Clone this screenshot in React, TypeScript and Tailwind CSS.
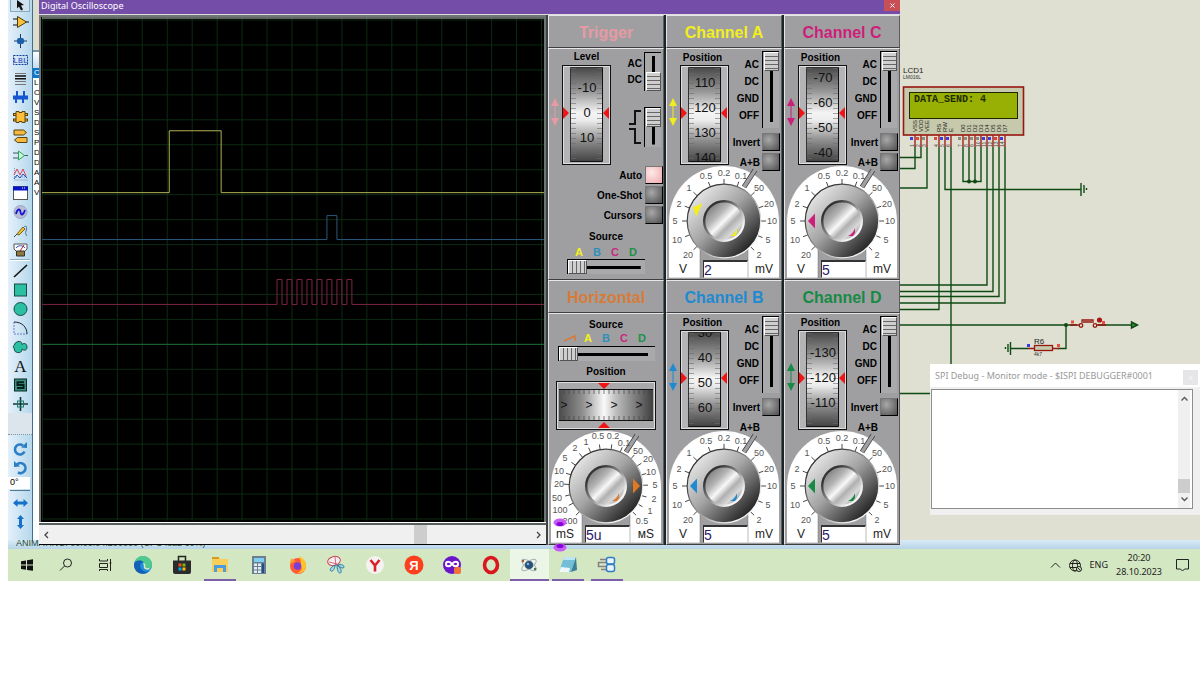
import type { ReactNode } from "react";
import clsx from "clsx";

/* ---------- LEFT TOOLBAR ---------- */

const tools: { label: string; icon: ReactNode }[] = [
  {
    label: "Component mode",
    icon: (
      <>
        <path d="M0 4h5M0 10h5M13 7h3" stroke="#111" />
        <path d="M4.500 1.500v11l9-5.500z" fill="#fbbf3a" stroke="#4d3c10" />
      </>
    ),
  },
  {
    label: "Junction dot mode",
    icon: (
      <>
        <path d="M1 7h13M7.500 0v14" stroke="#123c6b" />
        <rect x="4" y="4" width="7" height="6" rx="2" fill="#1b5fa8" />
      </>
    ),
  },
  {
    label: "Wire label mode",
    icon: (
      <>
        <rect x="0.500" y="2.500" width="14" height="9" fill="none" stroke="#123c9b" strokeDasharray="2 1" />
        <text x="7.500" y="10" fontSize="8" textAnchor="middle" fill="#1c39bb" fontFamily="Liberation Mono, monospace">LBL</text>
      </>
    ),
  },
  {
    label: "Text script mode",
    icon: (
      <>
        <path d="M2 1.500h11M2 9.500h11M2 12.500h11" stroke="#777" />
        <path d="M2 4h11M2 6.800h11" stroke="#111" strokeWidth="1.500" />
      </>
    ),
  },
  {
    label: "Buses mode",
    icon: (
      <>
        <path d="M0 6.500h15" stroke="#1557d0" strokeWidth="4" />
        <path d="M4 0v6M11 0v6M3 7v5M10 7v5" stroke="#1557d0" strokeWidth="2" />
      </>
    ),
  },
  {
    label: "Subcircuit mode",
    icon: (
      <>
        <path d="M0 4.500h15M0 10h15" stroke="#5c3d00" strokeWidth="3" />
        <path d="M1 4.500h13M1 10h13" stroke="#fbbf3a" />
        <path d="M3 1.500h3v1h3v-1h3v11H9v-1H6v1H3z" fill="#fbbf3a" stroke="#5c4308" />
      </>
    ),
  },
  {
    label: "Terminals mode",
    icon: (
      <>
        <path d="M1 1h9.500l3 2.500-3 2.500H1z" fill="#f5b93d" stroke="#574013" />
        <path d="M14 8.500H4.500l-3 2.500 3 2.500H14z" fill="#f5b93d" stroke="#574013" />
      </>
    ),
  },
  {
    label: "Device pins mode",
    icon: (
      <>
        <path d="M0 5h5M0 10h5M11 7.500h4" stroke="#3d5c66" />
        <path d="M5.500 3v9l6-4.500z" fill="#d3f5df" stroke="#28a75a" />
      </>
    ),
  },
  {
    label: "Graph mode",
    icon: (
      <>
        <path d="M1.500 1v12h13M1 10h13" fill="none" stroke="#7d93b3" strokeDasharray="1 1" />
        <path d="M1 8l3-6 3 6 3-6 3 7" fill="none" stroke="#e0405a" />
        <path d="M1 12l3-4 3 3 3-4 4 4" fill="none" stroke="#2456c8" />
      </>
    ),
  },
  {
    label: "Active popup mode",
    icon: (
      <>
        <rect x="0.500" y="0.500" width="14" height="13" fill="#fff" stroke="#555" />
        <path d="M0 2.500h15" stroke="#0713c9" strokeWidth="4" />
        <path d="M9 2h4" stroke="#fff" strokeDasharray="1 1" />
      </>
    ),
  },
  {
    label: "Generator mode",
    icon: (
      <>
        <circle cx="7.500" cy="7" r="6.500" fill="#b9bed6" stroke="#9aa3c4" />
        <path d="M3 9c1-5 4-6 4.500-2s3 3 4.500-2" fill="none" stroke="#1414d0" strokeWidth="1.800" />
      </>
    ),
  },
  {
    label: "Probe mode",
    icon: (
      <>
        <path d="M1 13l3-3" stroke="#444" />
        <path d="M4 10l6-7 2 2-6 6z" fill="#f4c430" stroke="#7b6010" />
        <path d="M11 3c3-3 3 2 2 4s0 4 1 5" fill="none" stroke="#4a6fa5" />
      </>
    ),
  },
  {
    label: "Instruments mode",
    icon: (
      <>
        <path d="M1 1h13v5l-3 3H4L1 6z" fill="#fff" stroke="#555" />
        <path d="M3 5c2-3 7-3 9 0" fill="none" stroke="#2456c8" />
        <path d="M7 8l4-6" stroke="#d31b1b" />
        <path d="M3.500 8h8v5h-8z" fill="#8b7a3b" stroke="#333" />
      </>
    ),
  },
];

const drawTools: { label: string; icon: ReactNode }[] = [
  { label: "2D line", icon: <path d="M1 13L14 1" stroke="#111" strokeWidth="1.600" /> },
  { label: "2D box", icon: <rect x="1.500" y="1" width="12" height="12" fill="#2bbfa3" stroke="#1c4a44" /> },
  { label: "2D circle", icon: <circle cx="7.500" cy="7" r="6.500" fill="#2bbfa3" stroke="#1c4a44" /> },
  {
    label: "2D arc",
    icon: (
      <>
        <path d="M1 1v12h13" fill="none" stroke="#6b7fd0" strokeDasharray="2 1" />
        <path d="M1 1c8 0 13 5 13 12" fill="none" stroke="#223" />
      </>
    ),
  },
  {
    label: "2D closed path",
    icon: (
      <path
        d="M4 2c3-1.500 5 0 5 2.500 2-2 5-1 5 2.500s-3 4-5 2c0 3-2 4-4.500 3.500S1 10.500 1.500 9C0 7.500 0 5.500 1.500 5 1.500 3.500 2.500 2.500 4 2z"
        fill="#2bbfa3"
        stroke="#1c4a44"
      />
    ),
  },
  {
    label: "2D text",
    icon: (
      <text x="7.500" y="13" fontSize="17" textAnchor="middle" fill="#111" fontFamily="Liberation Serif, serif">A</text>
    ),
  },
  {
    label: "2D symbol",
    icon: (
      <>
        <rect x="1.500" y="1" width="12" height="12" fill="#3d8d7e" stroke="#0b2b27" />
        <path d="M11 4.200H4.500v2.800h6v2.900H4" fill="none" stroke="#04201c" strokeWidth="2" />
      </>
    ),
  },
  {
    label: "2D marker",
    icon: (
      <>
        <path d="M0 7h15M7.500 0v14" stroke="#103c36" strokeWidth="1.600" />
        <rect x="4.500" y="4" width="6" height="6" fill="none" stroke="#1d7a6c" />
      </>
    ),
  },
];

function ToolButton({ label, children, className }: { label: string; children: ReactNode; className?: string }) {
  return (
    <button type="button" aria-label={label} className={clsx("flex h-[19px] items-center justify-center", className)}>
      <svg width="15" height="14" viewBox="0 0 15 14" className="overflow-visible">{children}</svg>
    </button>
  );
}

function Toolbar() {
  return (
    <div className="flex w-6 shrink-0 flex-col bg-linear-to-r from-[#e4f0fa] to-[#b5d8ec]">
      <button
        type="button"
        aria-label="Selection mode"
        className="mx-0.5 flex h-3 justify-center border border-t-0 border-[#8ba9bd] bg-[#cfe3f0]"
      >
        <svg width="11" height="11" viewBox="0 0 11 11">
          <path d="M2 0l7 5-3 .5 2 4-2 1-2-4-2 2z" fill="#111" />
        </svg>
      </button>
      {tools.map((t) => (
        <ToolButton key={t.label} label={t.label}>{t.icon}</ToolButton>
      ))}
      <div className="mx-0.5 h-0.5 border-t border-[#8fb1c6] bg-white" />
      {drawTools.map((t) => (
        <ToolButton key={t.label} label={t.label}>{t.icon}</ToolButton>
      ))}
      <div className="h-[22px] border-b border-dotted border-[#7b95a8] bg-[#dce5ec]" />

      {/* Rotation and mirroring */}
      <ToolButton label="Rotate clockwise" className="mt-1">
        <path d="M11.500 9.500A5 5 0 1 1 10 3.500" fill="none" stroke="#2b7ec6" strokeWidth="2.600" />
        <path d="M8 5.500l6 .5V0z" fill="#2b7ec6" />
      </ToolButton>
      <ToolButton label="Rotate anti-clockwise">
        <path d="M4 3.500A5 5 0 1 1 5 11.500" fill="none" stroke="#2b7ec6" strokeWidth="2.600" />
        <path d="M7 5.500L1 6V0z" fill="#2b7ec6" />
      </ToolButton>
      <input
        aria-label="Angle"
        defaultValue="0°"
        className="mr-0.5 h-3 w-[22px] bg-white pl-0.5 font-['Liberation_Sans',sans-serif] text-[9px] text-black"
      />
      <div className="mx-0.5 mb-0.5 h-0.5 border-b border-[#54798f]" />
      <ToolButton label="Mirror horizontally">
        <path d="M0 7l4.500-4v2.500h6V3L15 7l-4.500 4V8.500h-6V11z" fill="#1672c8" />
      </ToolButton>
      <ToolButton label="Mirror vertically">
        <path d="M7.500 0L11 4H9v6h2l-3.500 4L4 10h2V4H4z" fill="#1672c8" />
      </ToolButton>
    </div>
  );
}

const objects = ["C", "L", "O", "V", "S", "D", "S", "P", "D", "D", "A", "A", "V"];

function ObjectList() {
  return (
    <div className="flex w-[7px] shrink-0 flex-col overflow-hidden border-l border-[#3a6f96] bg-white font-['Liberation_Sans',sans-serif]">
      <div className="h-[52px] border-b-2 border-[#7c93a3] bg-[#dfdccb]" />
      <div className="h-4 bg-linear-to-b from-white to-[#c5dcec]" />
      <ul>
        {objects.map((o, i) => (
          <li key={i} className={clsx("h-[10px] pl-px text-[8px] leading-[10px]", i === 0 ? "bg-[#0a78d0] text-white" : "text-black")}>
            {o}
          </li>
        ))}
      </ul>
    </div>
  );
}

/* ---------- SCHEMATIC ---------- */

const pins = [
  { x: 915, name: "VSS", n: 1, c: "#3b3be0" },
  { x: 921, name: "VDD", n: 2, c: "#e04a3a" },
  { x: 927, name: "VEE", n: 3, c: "#8b8b80" },
  { x: 939, name: "RS", n: 4, c: "#e04a3a" },
  { x: 945, name: "RW", n: 5, c: "#3b3be0" },
  { x: 951, name: "E", n: 6, c: "#3b3be0" },
  { x: 963, name: "D0", n: 7, c: "#8b8b80" },
  { x: 969, name: "D1", n: 8, c: "#8b8b80" },
  { x: 975, name: "D2", n: 9, c: "#8b8b80" },
  { x: 981, name: "D3", n: 10, c: "#8b8b80" },
  { x: 987, name: "D4", n: 11, c: "#3b3be0" },
  { x: 993, name: "D5", n: 12, c: "#3b3be0" },
  { x: 999, name: "D6", n: 13, c: "#e03a3a" },
  { x: 1005, name: "D7", n: 14, c: "#3b3be0" },
];

function Schematic() {
  return (
    <svg
      width="1161"
      height="540"
      viewBox="39 0 1161 540"
      className="shrink-0"
      fontFamily="Liberation Sans, sans-serif"
    >
      <text x="903" y="73" fontSize="8" fill="#222">LCD1</text>
      <text x="903" y="79" fontSize="5" fill="#333">LM016L</text>
      <rect x="903.500" y="87" width="120" height="48" fill="#c6c9ab" stroke="#96170f" strokeWidth="1.600" />
      <rect x="909.500" y="92.500" width="108" height="26" fill="#98b003" stroke="#1d2600" />
      <text x="914" y="102" fontSize="10" fontWeight="700" fill="#1d2a00" fontFamily="Liberation Mono, monospace">DATA_SEND: 4</text>

      {/* wires */}
      <g fill="none" stroke="#0f4a14" strokeWidth="1.400">
        <path d="M921 147v10.500h-21M915 147v21.500h-15M927 147v41h-27" />
        <path d="M939 147v162.500h-39M945 147v42.500h136M951 147v217" />
        <path d="M963 147v34.500h18V147M969 147v34.500M975 147v34.500" />
        <path d="M987 147v138h-87M993 147v144.500h-93M999 147v149.500h-99M1005 147v156h-105" />
        <path d="M1081 183v13M1084 185v8M1086.500 188v2" />
        <path d="M900 325h177M1098 325h33M1066 325v23.500h-8M1028 348.500h-17M900 393.500h31" />
        <path d="M1010.500 342v13M1008 344v8M1005.500 347v2" />
        <path d="M1131.500 322v6l6-3z" fill="#2f8a3a" />
      </g>
      <g fill="#0f4a14">
        <circle cx="969" cy="181.500" r="2" />
        <circle cx="975" cy="181.500" r="2" />
        <circle cx="1066" cy="325" r="2" />
      </g>

      {pins.map((p) => (
        <g key={p.name}>
          <path d={`M${p.x} 135v12`} stroke="#a32015" strokeWidth="1.400" />
          <rect x={p.x - 5} y="137" width="3" height="3" fill={p.c} />
          <text transform={`translate(${p.x + 2} 132) rotate(-90)`} fontSize="6" fill="#222">{p.name}</text>
          <text transform={`translate(${p.x - 1} 147) rotate(-90)`} fontSize="5" fill="#444">{p.n}</text>
        </g>
      ))}

      {/* push button and resistor */}
      <g fill="none" stroke="#96170f" strokeWidth="1.300">
        <path d="M1070 325h9M1097 325h9M1082 323v-3h11v3M1083 322h9" />
        <circle cx="1081" cy="325.500" r="1.800" />
        <circle cx="1095" cy="325.500" r="1.800" />
        <path d="M1028 348.500h6M1053 348.500h6" />
        <rect x="1034.500" y="345.500" width="18" height="5" fill="#c6c9ab" />
      </g>
      <circle cx="1099.500" cy="320" r="2.600" fill="#a81616" />
      <rect x="1071" y="320.500" width="3" height="3" fill="#e8503f" />
      <rect x="1102" y="321" width="3" height="3" fill="#e8503f" />
      <rect x="1027" y="344" width="3" height="3" fill="#3b3be0" />
      <rect x="1057" y="344" width="3" height="3" fill="#e8503f" />
      <text x="1034" y="344" fontSize="8" fill="#222">R6</text>
      <text x="1034" y="356" fontSize="5" fill="#333">4k7</text>
    </svg>
  );
}

/* ---------- OSCILLOSCOPE ---------- */

const pulses = Array.from({ length: 8 }, (_, i) => `H${277.5 + i * 10}V279.500h5V304.500`).join("");

function Display() {
  return (
    <div className="flex w-[509px] shrink-0 flex-col border-r-2 border-[#3c4242] bg-white">
      <div className="flex-1 border-x-2 border-t-2 border-[#6f7673] bg-black pl-px">
        <svg width="503" height="504" viewBox="42 17 503 504" className="block w-full">
          <defs>
            <pattern id="grid" x="42" y="19" width="25" height="25" patternUnits="userSpaceOnUse">
              <path d="M0.500 0v25M0 0.500h25" stroke="#0b2a10" />
            </pattern>
          </defs>
          <rect x="42" y="17" width="503" height="504" fill="url(#grid)" />
          <path d="M42 17.500h503" stroke="#c8ccca" />
          <g fill="none">
            <path d="M42 192.500H169.500V130.500H221.500V192.500H545" stroke="#b3b355" />
            <path d="M42 239.500H327.500V215.500H337.500V239.500H545" stroke="#28587c" />
            <path d={`M42 304.500${pulses}H545`} stroke="#7d2444" />
            <path d="M42 344.500H545" stroke="#1c6b34" />
          </g>
        </svg>
      </div>
      <div className="h-[3px] border-t border-white bg-[#55605a]" />
      <div className="flex h-5 items-center border-b border-black bg-[#f0f0f0] px-1">
        <button type="button" aria-label="Scroll left">
          <svg width="6" height="8" viewBox="0 0 6 8"><path d="M5 1L2 4l3 3" fill="none" stroke="#444" strokeWidth="1.300" /></svg>
        </button>
        <div className="flex h-full flex-1 justify-end pr-[109px]">
          <div className="w-[13px] bg-[#cdcdcd]" />
        </div>
        <button type="button" aria-label="Scroll right">
          <svg width="6" height="8" viewBox="0 0 6 8"><path d="M1 1l3 3-3 3" fill="none" stroke="#444" strokeWidth="1.300" /></svg>
        </button>
      </div>
    </div>
  );
}

function Panel({ title, color, children }: { title: string; color: string; children: ReactNode }) {
  return (
    <section className="flex h-[265px] flex-col text-[10px] font-bold text-black">
      <h2
        className={clsx(
          "h-[33px] border border-t-[#e6e6e6] border-r-[#5c5c60] border-b-[#3f3f42] border-l-[#e6e6e6] bg-[#9f9fa2] pt-px text-center text-base leading-[32px]",
          color
        )}
      >
        {title}
      </h2>
      <div className="flex flex-1 flex-col border border-t-[#e6e6e6] border-r-[#5c5c60] border-b-[#3f3f42] border-l-[#e6e6e6] bg-[#9f9fa2]">
        {children}
      </div>
    </section>
  );
}

function VSlider({ label, value, className }: { label: string; value: number; className: string }) {
  return (
    <input
      type="range"
      aria-label={label}
      defaultValue={value}
      className={clsx(
        "w-[17px] shrink-0 appearance-none border-t border-l border-black [writing-mode:vertical-lr] [background:linear-gradient(#000,#000)_center/3px_86%_no-repeat,#a9a9ac]",
        "[&::-webkit-slider-thumb]:h-[19px] [&::-webkit-slider-thumb]:w-[15px] [&::-webkit-slider-thumb]:appearance-none [&::-webkit-slider-thumb]:border [&::-webkit-slider-thumb]:border-[#555] [&::-webkit-slider-thumb]:border-t-white [&::-webkit-slider-thumb]:border-l-white [&::-webkit-slider-thumb]:[background:repeating-linear-gradient(#cfcfcf_0_3px,#666_3px_4px)]",
        className
      )}
    />
  );
}

function HSlider({ label, className }: { label: string; className: string }) {
  return (
    <input
      type="range"
      aria-label={label}
      defaultValue={0}
      className={clsx(
        "h-[15px] appearance-none self-center border-t border-l border-black [background:linear-gradient(#000,#000)_center/88%_3px_no-repeat,#a9a9ac]",
        "[&::-webkit-slider-thumb]:h-[14px] [&::-webkit-slider-thumb]:w-[19px] [&::-webkit-slider-thumb]:appearance-none [&::-webkit-slider-thumb]:border [&::-webkit-slider-thumb]:border-[#555] [&::-webkit-slider-thumb]:border-t-white [&::-webkit-slider-thumb]:border-l-white [&::-webkit-slider-thumb]:[background:repeating-linear-gradient(90deg,#cfcfcf_0_3px,#666_3px_4px)]",
        className
      )}
    />
  );
}

function PushButton({ label, on }: { label: string; on?: boolean }) {
  return (
    <button
      type="button"
      aria-label={label}
      className={clsx(
        "size-[18px] shrink-0 border border-t-[#777] border-r-black border-b-black border-l-[#777]",
        on
          ? "bg-radial-[at_35%_35%] from-[#ffeaea] to-[#eda9ac]"
          : "bg-radial-[at_35%_35%] from-[#a8a8a8] to-[#4d4d4d]"
      )}
    />
  );
}

function UpDown({ className }: { className: string }) {
  return (
    <svg width="13" height="28" viewBox="0 0 13 28" className={clsx("mt-[49px] shrink-0", className)}>
      <path d="M6 0l4 8H2zM6 28l4-8H2zM5.500 8h1v12h-1z" fill="currentColor" />
    </svg>
  );
}

const ticks = Array.from({ length: 19 }, (_, i) => 3 + i * 5);

function Drum({ id, marks }: { id: string; marks: { y: number; t: string }[] }) {
  return (
    <svg width="49" height="100" viewBox="0 0 49 100">
      <defs>
        <linearGradient id={id} x1="0" y1="0" x2="0" y2="1">
          <stop offset="0" stopColor="#4b4b4b" />
          <stop offset="0.250" stopColor="#969696" />
          <stop offset="0.480" stopColor="#f4f4f4" />
          <stop offset="0.560" stopColor="#ededed" />
          <stop offset="0.780" stopColor="#8d8d8d" />
          <stop offset="1" stopColor="#444" />
        </linearGradient>
        <clipPath id={`${id}-clip`}><rect x="9" y="3" width="32" height="93" /></clipPath>
      </defs>
      <rect x="0.500" y="0.500" width="48" height="99" fill="#b4b4b6" stroke="#111" />
      <rect x="1.500" y="1.500" width="46" height="97" fill="none" stroke="#dedede" />
      <path d="M8.500 97V2.500H41" fill="none" stroke="#333" />
      <rect x="9" y="3" width="31" height="93" fill={`url(#${id})`} />
      <path d="M40.500 3v93.500H9" fill="none" stroke="#111" />
      <path d={ticks.map((y) => `M9 ${y}.5h5M35 ${y}.5h5`).join("")} stroke="#6c6c6c" strokeWidth="0.600" />
      <g clipPath={`url(#${id}-clip)`} fontSize="13" fontWeight="400" textAnchor="middle" fill="#111">
        {marks.map((m) => (
          <text key={m.t} x="25" y={m.y + 5}>{m.t}</text>
        ))}
      </g>
      <path d="M1 42v12l6-6zM47 42v12l-6-6z" fill="#f01414" />
    </svg>
  );
}

type Mark = [number, number, string];

const voltMarks: Mark[] = [
  [-36, 34, "20"],
  [-47, 19, "10"],
  [-49, 0, "5"],
  [-45, -17, "2"],
  [-35, -33, "1"],
  [-18, -45, "0.5"],
  [0, -48, "0.2"],
  [17, -45, "0.1"],
  [35, -33, "50"],
  [45, -17, "20"],
  [48, 0, "10"],
  [44, 19, "5"],
  [35, 34, "2"],
];

const timeMarks: Mark[] = [
  [-36, 35, "200"],
  [-46, 24, "100"],
  [-49, 12, "50"],
  [-47, -2, "20"],
  [-47, -15, "10"],
  [-41, -28, "5"],
  [-31, -38, "2"],
  [-20, -44, "1"],
  [-8, -50, "0.5"],
  [7, -50, "0.2"],
  [18, -43, "0.1"],
  [32, -35, "50"],
  [42, -27, "20"],
  [45, -14, "10"],
  [49, -1, "5"],
  [48, 13, "2"],
  [44, 25, "1"],
  [36, 35, "0.5"],
];

function Dial({
  id,
  marks,
  units,
  value,
  label,
  angle,
  className,
}: {
  id: string;
  marks: Mark[];
  units: [string, string];
  value: string;
  label: string;
  angle: number;
  className: string;
}) {
  return (
    <div className={clsx("relative self-center font-normal", className)}>
      <svg width="112" height="113" viewBox="-56 -56 112 113" className="block">
        <defs>
          <linearGradient id={`${id}-ring`} x1="0.150" y1="0.150" x2="0.850" y2="0.850">
            <stop offset="0" stopColor="#e2e2e2" />
            <stop offset="0.450" stopColor="#a4a4a4" />
            <stop offset="1" stopColor="#262626" />
          </linearGradient>
          <linearGradient id={`${id}-edge`} x1="0" y1="0" x2="1" y2="1">
            <stop offset="0.200" stopColor="#333" />
            <stop offset="0.800" stopColor="#f4f4f4" />
          </linearGradient>
          <linearGradient id={`${id}-face`} x1="0" y1="0" x2="1" y2="1">
            <stop offset="0.100" stopColor="#777" />
            <stop offset="0.350" stopColor="#b5b5b5" />
            <stop offset="0.500" stopColor="#f8f8f8" />
            <stop offset="0.620" stopColor="#b0b0b0" />
            <stop offset="0.750" stopColor="#d8d8d8" />
            <stop offset="0.950" stopColor="#777" />
          </linearGradient>
        </defs>
        <path d="M-55.500 57V0a55.500 55.500 0 0 1 111 0V57H24V28H-24V57z" fill="#fff" stroke="#777" strokeWidth="0.500" />
        <path d="M20 -34L31 -51" stroke="#333" strokeWidth="5" />
        <path d="M20 -34L33 -54" stroke="#a0a0a2" strokeWidth="3.500" />
        <g stroke="#333" strokeWidth="0.900">
          {marks.map(([x, y], i) => {
            const r = Math.hypot(x, y);
            return <path key={i} d={`M${(x / r) * 37} ${(y / r) * 37}L${(x / r) * 42} ${(y / r) * 42}`} />;
          })}
        </g>
        <g fontSize="9" fill="#555" textAnchor="middle">
          {marks.map(([x, y, t], i) => (
            <text key={i} x={x} y={y + 3}>{t}</text>
          ))}
        </g>
        <g fontSize="12" fill="#222" textAnchor="middle">
          <text x="-41" y="52">{units[0]}</text>
          <text x="40" y="52">{units[1]}</text>
        </g>
        <circle r="36.800" fill={`url(#${id}-ring)`} stroke={`url(#${id}-edge)`} strokeWidth="1.200" />
        <circle r="19.800" fill={`url(#${id}-face)`} stroke={`url(#${id}-edge)`} strokeWidth="2.400" />
        <path d="M-34 0l7-7.500v15z" fill="currentColor" transform={`rotate(${angle})`} />
        <path d="M6 15q5-2 7-8v5l-2 3z" fill="currentColor" />
      </svg>
      <input
        aria-label={label}
        defaultValue={value}
        className="absolute top-[95px] left-[35px] h-[18px] w-[45px] border border-t-2 border-t-[#333] border-r-[#ddd] border-b-[#ddd] border-l-[#333] bg-white text-sm leading-4 text-[#2a1a6b]"
      />
    </div>
  );
}

const sources = [
  { name: "A", color: "text-[#f4f01c]" },
  { name: "B", color: "text-[#2f8fb8]" },
  { name: "C", color: "text-[#c72a7c]" },
  { name: "D", color: "text-[#1c9247]" },
];

function SourceLetters({ ramp }: { ramp?: boolean }) {
  return (
    <div className="flex h-3 justify-center text-[11px] leading-3">
      {ramp && (
        <span className="flex w-[18px] items-center justify-center">
          <svg width="14" height="8" viewBox="0 0 14 8"><path d="M1 7l11-5v5" fill="none" stroke="#d87a3c" strokeWidth="1.600" /></svg>
        </span>
      )}
      {sources.map((s) => (
        <span key={s.name} className={clsx("w-[18px] text-center", s.color)}>{s.name}</span>
      ))}
    </div>
  );
}

function TriggerPanel() {
  return (
    <Panel title="Trigger" color="text-[#e89aa4]">
      <div className="flex h-[116px] pr-0.5">
        <UpDown className="text-[#e89aa4]" />
        <div className="flex flex-col">
          <span className="h-4 text-center leading-4">Level</span>
          <Drum id="drum-t" marks={[{ y: 22, t: "-10" }, { y: 47, t: "0" }, { y: 72, t: "10" }]} />
        </div>
        <div className="flex flex-1 flex-col gap-4 pt-[3px]">
          <div className="flex justify-end gap-0.5">
            <div className="pt-1 text-right leading-4">
              <div>AC</div>
              <div>DC</div>
            </div>
            <VSlider label="Trigger coupling" value={100} className="h-[39px]" />
          </div>
          <div className="flex items-center justify-end gap-[3px]">
            <svg width="12" height="36" viewBox="0 0 12 36">
              <path d="M0 15h6V2h6M0 20h6v14h6" fill="none" stroke="#111" strokeWidth="2" />
            </svg>
            <VSlider label="Trigger edge" value={0} className="h-10" />
          </div>
        </div>
      </div>
      {["Auto", "One-Shot", "Cursors"].map((name, i) => (
        <div key={name} className="flex h-5 items-center justify-end gap-[3px]">
          <span>{name}</span>
          <PushButton label={name} on={i === 0} />
        </div>
      ))}
      <span className="mt-1 h-[17px] text-center leading-4">Source</span>
      <SourceLetters />
      <HSlider label="Trigger source" className="mt-px w-[78px]" />
    </Panel>
  );
}

function HorizontalPanel() {
  return (
    <Panel title="Horizontal" color="text-[#d67c38]">
      <span className="h-[18px] pt-1 text-center leading-[14px]">Source</span>
      <SourceLetters ramp />
      <HSlider label="Horizontal source" className="mt-0.5 w-[97px]" />
      <span className="h-5 pt-px text-center leading-5">Position</span>
      <svg width="100" height="49" viewBox="0 0 100 49" className="self-center">
        <defs>
          <linearGradient id="drum-h">
            <stop offset="0" stopColor="#4b4b4b" />
            <stop offset="0.250" stopColor="#8f8f8f" />
            <stop offset="0.480" stopColor="#fafafa" />
            <stop offset="0.600" stopColor="#c0c0c0" />
            <stop offset="1" stopColor="#3f3f3f" />
          </linearGradient>
        </defs>
        <rect x="0.500" y="0.500" width="99" height="48" fill="#a9a9ac" stroke="#111" />
        <rect x="1.500" y="1.500" width="97" height="46" fill="none" stroke="#dedede" />
        <rect x="3" y="9" width="94" height="30" fill="url(#drum-h)" />
        <path d="M3 8.500h94M3 39.500h94" stroke="#111" />
        <path
          d={Array.from({ length: 18 }, (_, i) => `M${8 + i * 5} 9v4M${8 + i * 5} 39v-4`).join("")}
          stroke="#444"
          strokeWidth="0.700"
        />
        <g fontSize="12" fontWeight="400" textAnchor="middle" fill="#111">
          {[8, 33, 58, 83].map((x) => (
            <text key={x} x={x} y="28">{">"}</text>
          ))}
        </g>
        <path d="M42 2h12l-6 6zM42 47h12l-6-6z" fill="#f01414" />
      </svg>
      <Dial
        id="dial-h"
        marks={timeMarks}
        units={["mS", "мS"]}
        value="5u"
        label="Time base"
        angle={180}
        className="text-[#e07a22]"
      />
    </Panel>
  );
}

function ChannelPanel({
  name,
  color,
  marks,
  value,
  angle = 0,
  sum,
}: {
  name: string;
  color: string;
  marks: { y: number; t: string }[];
  value: string;
  angle?: number;
  sum?: boolean;
}) {
  return (
    <Panel title={`Channel ${name}`} color={color}>
      <div className="flex h-[123px]">
        <UpDown className={color} />
        <div className="flex flex-col">
          <span className="h-4 pt-px pr-1 text-center leading-4">Position</span>
          <Drum id={`drum-${name}`} marks={marks} />
        </div>
        <div className="flex flex-1 flex-col pr-px">
          <div className="flex h-[83px] justify-end gap-[3px] pt-0.5 pr-px">
            <div className="pt-[5px] text-right leading-[17px]">
              <div>AC</div>
              <div>DC</div>
              <div>GND</div>
              <div>OFF</div>
            </div>
            <VSlider label={`Channel ${name} coupling`} value={0} className="h-[77px]" />
          </div>
          <div className="flex h-5 items-center justify-end gap-0.5">
            <span>Invert</span>
            <PushButton label={`Invert ${name}`} />
          </div>
          <div className="flex h-5 items-center justify-end gap-0.5">
            <span>A+B</span>
            {sum ? <PushButton label={`A+B ${name}`} /> : <span className="w-[18px]" />}
          </div>
        </div>
      </div>
      <Dial
        id={`dial-${name}`}
        marks={voltMarks}
        units={["V", "mV"]}
        value={value}
        label={`Channel ${name} scale`}
        angle={angle}
        className={clsx("-mt-[7px]", color)}
      />
    </Panel>
  );
}

function Oscilloscope() {
  return (
    <div className="absolute top-0 left-[31px] z-10 flex w-[861px] flex-col bg-[#1c2428] font-['Liberation_Sans',sans-serif]">
      <div className="flex h-[15px] items-start justify-between border-b border-[#ddd] bg-[#744da9] pl-0.5 font-['Noto_Sans',sans-serif] text-[9px] leading-3 text-white">
        <span>Digital Oscilloscope</span>
        <button type="button" aria-label="Close" className="flex h-[11px] w-4 items-center justify-center bg-[#c84f55]">
          <svg width="5" height="5" viewBox="0 0 5 5"><path d="M0.500 0.500l4 4M4.500 0.500l-4 4" stroke="#fff" /></svg>
        </button>
      </div>
      <div className="flex">
        <Display />
        <div className="grid flex-1 grid-cols-3 gap-x-0.5">
          <TriggerPanel />
          <ChannelPanel
            name="A"
            color="text-[#f2ee1e]"
            value="2"
            angle={24}
            sum
            marks={[{ y: 17, t: "110" }, { y: 42, t: "120" }, { y: 67, t: "130" }, { y: 92, t: "140" }]}
          />
          <ChannelPanel
            name="C"
            color="text-[#cc1f7a]"
            value="5"
            sum
            marks={[{ y: 12, t: "-70" }, { y: 37, t: "-60" }, { y: 62, t: "-50" }, { y: 87, t: "-40" }]}
          />
          <HorizontalPanel />
          <ChannelPanel
            name="B"
            color="text-[#208ad0]"
            value="5"
            marks={[{ y: 2, t: "30" }, { y: 27, t: "40" }, { y: 52, t: "50" }, { y: 77, t: "60" }]}
          />
          <ChannelPanel
            name="D"
            color="text-[#178a45]"
            value="5"
            marks={[{ y: 22, t: "-130" }, { y: 47, t: "-120" }, { y: 72, t: "-110" }]}
          />
        </div>
      </div>
    </div>
  );
}

/* ---------- SPI DEBUGGER ---------- */

function SpiDebug() {
  return (
    <div className="absolute top-[364px] right-0 left-[922px] z-10 flex h-[151px] flex-col bg-[#f0f0f0]">
      <div className="flex h-[23px] items-center justify-between bg-white pr-0.5 pl-[5px] font-['Noto_Sans',sans-serif] text-[9px] text-[#999]">
        <span>SPI Debug - Monitor mode - $ISPI DEBUGGER#0001</span>
        <button type="button" aria-label="Close" className="mt-1 size-[15px] bg-[#e6e6e8] leading-3 text-[#f6f6f6]">×</button>
      </div>
      <div className="mt-0.5 mr-[7px] mb-1.5 ml-px flex flex-1 border border-[#8b8d90] bg-white">
        <textarea aria-label="SPI log" readOnly className="flex-1 resize-none" />
        <div className="mr-0.5 flex w-3 flex-col items-center justify-between bg-[#f0f0f0] py-1.5">
          <svg width="7" height="5" viewBox="0 0 7 5"><path d="M0.500 4.500l3-3 3 3" fill="none" stroke="#555" strokeWidth="1.300" /></svg>
          <div className="mt-auto mb-1 h-[14px] w-3 bg-[#cdcdcd]" />
          <svg width="7" height="5" viewBox="0 0 7 5"><path d="M0.500 0.500l3 3 3-3" fill="none" stroke="#555" strokeWidth="1.300" /></svg>
        </div>
      </div>
    </div>
  );
}

/* ---------- TASKBAR ---------- */

const apps: { label: string; state?: "open" | "active"; icon: ReactNode }[] = [
  { label: "Start", icon: <path d="M4 6.200l5-.8v4.200H4zM10 5.200l6-.9v5.300h-6zM4 10.500h5v4.200l-5-.8zM10 10.500h6v5.300l-6-.9z" fill="#111" /> },
  {
    label: "Search",
    icon: (
      <>
        <circle cx="11.500" cy="8" r="4" fill="none" stroke="#222" />
        <path d="M8.500 11L4 15.500" stroke="#222" />
      </>
    ),
  },
  {
    label: "Task view",
    icon: <path d="M4.500 4v2h8V4M4.500 8.500h8v4h-8zM4.500 16v-1.500h8V16M15.500 4v12M14.500 8h2" fill="none" stroke="#222" />,
  },
  {
    label: "Edge",
    icon: (
      <>
        <circle cx="10" cy="10" r="9" fill="#1f8fdc" />
        <path d="M1.500 7C3.500 2 8 .5 12 1.300c4 .8 7 4.200 7 8.200 0 3-2.500 4.500-5 4.500-2 0-3-1-2-2.500C13.500 8 7 3.500 1.500 7z" fill="#4fc98d" />
        <path d="M1 10c0-4 6-6 9.500-3-3 .5-4 3-3 5.500 1 3 4 5 8 4-4 4-14 3-14.500-6.500z" fill="#1560b4" />
        <path d="M10.500 8.500c2 1 1 2.500 1 3.500s1.500 2.500 5 1.500" fill="none" stroke="#d3e8c2" strokeWidth="1.600" />
      </>
    ),
  },
  {
    label: "Microsoft Store",
    icon: (
      <>
        <path d="M6.500 6V1.500h7V6" fill="none" stroke="#222" strokeWidth="1.500" />
        <path d="M1 5.500h18V17q0 2-2 2H3q-2 0-2-2z" fill="#2b2b2d" />
        <path d="M6.500 8.500h3v3h-3z" fill="#f25022" />
        <path d="M10.500 8.500h3v3h-3z" fill="#7fba00" />
        <path d="M6.500 12.500h3v3h-3z" fill="#00a4ef" />
        <path d="M10.500 12.500h3v3h-3z" fill="#ffb900" />
      </>
    ),
  },
  {
    label: "Explorer",
    state: "open",
    icon: (
      <>
        <path d="M2 2h7l1 2h8v13H2z" fill="#f9cf5c" />
        <path d="M2 2h7v2H2z" fill="#d89a23" />
        <path d="M4 10h12v7h-3v-4H7v4H4z" fill="#4a9ce0" />
      </>
    ),
  },
  {
    label: "Calculator",
    icon: (
      <>
        <rect x="3" y="1" width="14" height="18" fill="#6a7f92" />
        <rect x="5" y="3" width="10" height="4" fill="#7fd0f0" />
        <path d="M5 8.500h3v2.500H5zM9 8.500h3v2.500H9zM5 12h3v2.500H5zM9 12h3v2.500H9zM5 15.500h3V18H5zM9 15.500h3V18H9z" fill="#e4ecf2" />
        <path d="M13 8.500h2V18h-2z" fill="#1b4f8c" />
      </>
    ),
  },
  {
    label: "Firefox",
    icon: (
      <>
        <circle cx="10" cy="11" r="8" fill="#ff5a36" />
        <path d="M11 1c4 2 8 6 7 11-1 4-5 7-9 6 5-2 6-5 3-8 2-2 0-6-1-9z" fill="#ffc229" />
        <path d="M2 9C2 6 3 4 4 3c0 2 2 2 4 3z" fill="#ff9a2b" />
        <circle cx="9.500" cy="11" r="3.800" fill="#7a3fd6" />
      </>
    ),
  },
  {
    label: "Snipping Tool",
    icon: (
      <>
        <ellipse cx="8" cy="6" rx="6.500" ry="4.500" fill="#f6eef0" stroke="#c7485a" transform="rotate(-15 8 6)" />
        <path d="M3 7l8 2M9 2l1 9" stroke="#c7485a" strokeWidth="0.800" />
        <path d="M9 10c-4 2-6 5-4 6s4-3 4-6zM11 10c0 4 1 8 3 8s2-4-3-8zM12 10c2 3 6 4 6 2s-3-3-6-2z" fill="#a9d9e8" stroke="#277a98" />
      </>
    ),
  },
  {
    label: "Yandex Browser",
    icon: (
      <>
        <circle cx="10" cy="10" r="9" fill="#f5f2f2" />
        <path d="M5.500 5l4.500 5.500L14.500 5M10 10v6.500" fill="none" stroke="#d8232a" strokeWidth="2.600" />
      </>
    ),
  },
  {
    label: "Yandex",
    icon: (
      <>
        <circle cx="10" cy="10" r="9.500" fill="#fc3f1d" />
        <text x="10" y="15" fontSize="13" fontWeight="700" textAnchor="middle" fill="#fff" fontFamily="Liberation Sans, sans-serif">Я</text>
      </>
    ),
  },
  {
    label: "Infinity",
    icon: (
      <>
        <circle cx="10" cy="10" r="9" fill="#6a16c9" />
        <path d="M10 9C8 6 4 6 4 9s4 3 6 0 6-3 6 0-4 3-6 0z" fill="none" stroke="#fff" strokeWidth="2" />
        <rect x="12" y="12" width="7" height="7" rx="2" fill="#f0733a" />
      </>
    ),
  },
  { label: "Opera", icon: <ellipse cx="10" cy="10" rx="6.500" ry="7.500" fill="none" stroke="#d8181f" strokeWidth="3.600" /> },
  {
    label: "Proteus",
    state: "active",
    icon: (
      <>
        <ellipse cx="10" cy="10" rx="8.500" ry="3.500" fill="none" stroke="#a8b2b8" transform="rotate(35 10 10)" />
        <ellipse cx="10" cy="10" rx="8.500" ry="3.500" fill="none" stroke="#a8b2b8" transform="rotate(-35 10 10)" />
        <circle cx="10" cy="10" r="4" fill="#28527c" />
        <circle cx="9" cy="9" r="1.200" fill="#8fb6d8" />
        <circle cx="4" cy="6" r="1.200" fill="#a8552f" />
        <circle cx="16" cy="14" r="1.200" fill="#3e7b45" />
      </>
    ),
  },
  {
    label: "Notepad",
    state: "open",
    icon: (
      <>
        <path d="M6 2h12l-5 15H1z" fill="#73bfd8" />
        <path d="M6 2h12l-1 3H5z" fill="#bfe5f0" />
        <path d="M18 2l1 13-6 2z" fill="#3c7f98" />
        <path d="M3 12l9 1-1 4H1z" fill="#eef7fa" />
      </>
    ),
  },
  {
    label: "Virtual Terminal",
    state: "open",
    icon: (
      <>
        <path d="M3 4.500h8M1.500 7.500h10v4h-10zM4 14.500h7" fill="none" stroke="#8a7d85" strokeWidth="1.500" />
        <rect x="9.500" y="2.500" width="8" height="6.500" rx="2" fill="#eaf4fb" stroke="#2e7cc4" strokeWidth="1.500" />
        <rect x="9.500" y="9.500" width="8" height="7" rx="2" fill="#eaf4fb" stroke="#2e7cc4" strokeWidth="1.500" />
      </>
    ),
  },
];

function Taskbar() {
  return (
    <footer className="flex h-8 justify-between bg-[#d3e8c2] font-['Noto_Sans',sans-serif] text-[#222]">
      <nav className="flex w-[618px]">
        {apps.map((a) => (
          <button
            key={a.label}
            type="button"
            aria-label={a.label}
            className={clsx("flex flex-1 flex-col items-center justify-end", a.state === "active" && "bg-[#ecf6e6]")}
          >
            <svg width="20" height="20" viewBox="0 0 20 20" className="mb-1">{a.icon}</svg>
            <span className={clsx("h-0.5", a.state === "active" ? "w-full" : "w-8", a.state && "bg-[#7d5ea8]")} />
          </button>
        ))}
      </nav>
      <div className="flex items-center gap-2 pr-[11px] text-[9px]">
        <svg width="11" height="6" viewBox="0 0 11 6"><path d="M1 5.500L5.500 1 10 5.500" fill="none" stroke="#222" /></svg>
        <svg width="13" height="13" viewBox="0 0 13 13" fill="none" stroke="#222">
          <circle cx="6" cy="6.500" r="5.500" />
          <ellipse cx="6" cy="6.500" rx="2.500" ry="5.500" />
          <path d="M1 4.500h10M1 8.500h10" />
          <circle cx="10" cy="10" r="2.500" fill="#d3e8c2" />
          <path d="M8.500 8.500l3 3" />
        </svg>
        <span>ENG</span>
        <div className="text-center leading-[14px]">
          <div>20:20</div>
          <div>28.10.2023</div>
        </div>
        <svg width="13" height="13" viewBox="0 0 13 13" className="ml-1.5">
          <path d="M0.500 0.500h12v9.500H8.500L6.500 12l-2-2h-4z" fill="none" stroke="#222" />
        </svg>
      </div>
    </footer>
  );
}

export default function App() {
  return (
    <main className="min-h-screen overflow-hidden bg-white pl-2">
      <div className="relative">
        <div className="flex overflow-hidden bg-[#dfe0d1]">
          <Toolbar />
          <ObjectList />
          <Schematic />
        </div>
        <div className="h-[9px] bg-linear-to-b from-[#d9ebf6] to-[#b7d4e8] pl-2 font-['Liberation_Sans',sans-serif] text-[9px] leading-[6px] whitespace-nowrap text-[#1f4a33]">
          ANIMATING: 00:00:04.200000 (CPU load 60%)
        </div>
        <Oscilloscope />
        <SpiDebug />
        <Taskbar />

        {/* pointer marks */}
        <svg width="14" height="34" viewBox="0 0 14 34" className="absolute top-[518px] left-[545px] z-20">
          <ellipse cx="7" cy="4.500" rx="6.500" ry="4" fill="#c45cf5" />
          <ellipse cx="7" cy="6" rx="3.500" ry="2" fill="#8a00d8" />
          <ellipse cx="7" cy="29.500" rx="6.500" ry="4" fill="#c45cf5" />
          <ellipse cx="7" cy="28" rx="3.500" ry="2" fill="#8a00d8" />
        </svg>
      </div>
    </main>
  );
}
